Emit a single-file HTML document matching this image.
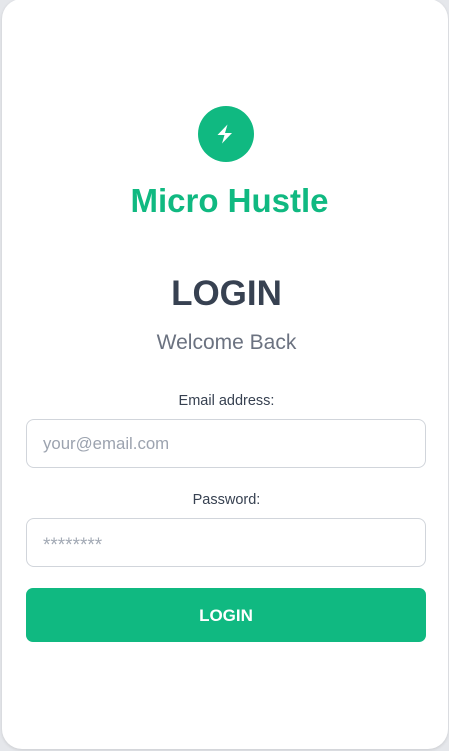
<!DOCTYPE html>
<html><head><meta charset="utf-8"><style>
html,body{margin:0;padding:0;width:449px;height:751px;background:#e5e7eb;overflow:hidden;font-family:"Liberation Sans",Arial,sans-serif;}
.card{position:absolute;left:2px;top:-1px;width:446px;height:750px;background:#fff;border-radius:20px;box-shadow:0 1px 3px rgba(0,0,0,.12);}
.abs{position:absolute;left:2px;width:449px;text-align:center;}
.icon{position:absolute;left:198px;top:106px;width:56px;height:56px;border-radius:50%;background:#10b981;}
.inp{position:absolute;left:26px;width:398px;height:47px;border:1px solid #d1d5db;border-radius:8px;background:#fff;font-size:16.8px;color:#9ca3af;line-height:47px;box-sizing:content-box;}
.inp span{position:absolute;left:16px;}
.btn{position:absolute;left:26px;top:588px;width:400px;height:54px;background:#10b981;border-radius:7px;color:#fff;font-weight:bold;font-size:17px;text-align:center;line-height:56px;}
</style></head><body>
<div class="card"></div>
<div class="icon"><svg width="56" height="56" viewBox="0 0 56 56"><path d="M29.5 18.5 L19.5 29 L26.5 29 L24 37.5 L34 27 L27 27 Z" fill="#fff"/></svg></div>
<div class="abs" style="left:5px;top:182px;font-size:33px;font-weight:bold;color:#10b981;">Micro Hustle</div>
<div class="abs" style="top:274px;font-size:35px;font-weight:bold;color:#374151;">LOGIN</div>
<div class="abs" style="top:331px;font-size:21px;color:#6b7280;">Welcome Back</div>
<div class="abs" style="top:393px;font-size:14.5px;color:#374151;">Email address:</div>
<div class="inp" style="top:419px"><span>your@email.com</span></div>
<div class="abs" style="top:492px;font-size:14.5px;color:#374151;">Password:</div>
<div class="inp" style="top:518px"><span style="font-size:19px;top:3px;color:#a3aab5">********</span></div>
<div class="btn">LOGIN</div>
</body></html>
